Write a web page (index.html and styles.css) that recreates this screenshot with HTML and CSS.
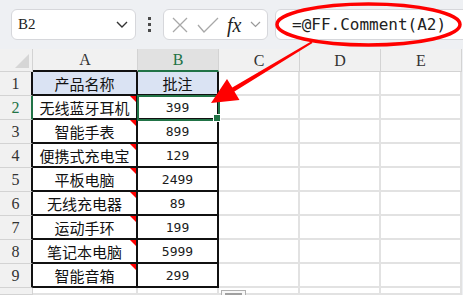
FILE: index.html
```html
<!DOCTYPE html>
<html lang="zh-CN">
<head>
  <meta charset="UTF-8" />
  <meta name="viewport" content="width=device-width, initial-scale=1.0"/>
  <title>FF.Comment</title>
  <link rel="stylesheet" href="styles.css">
</head>
<body>
  <div class="toolbar">
    <div class="name-box">
      <span>B2</span>
      <svg class="chev" width="12" height="7" viewBox="0 0 12 7"><path d="M1 1l5 5 5-5" fill="none" stroke="#333" stroke-width="1.4"/></svg>
    </div>
    <div class="grip"><i></i><i></i><i></i></div>
    <div class="fx-tools">
      <svg width="16" height="16" viewBox="0 0 16 16"><path d="M1 1l14 14M15 1L1 15" stroke="#a8a8a8" stroke-width="1.3"/></svg>
      <svg width="22" height="16" viewBox="0 0 22 16"><path d="M1 8l6 7L21 1" fill="none" stroke="#a8a8a8" stroke-width="1.3"/></svg>
      <span class="fx">fx</span>
      <svg width="11" height="7" viewBox="0 0 11 7"><path d="M1 1l4.5 4.5L10 1" fill="none" stroke="#999" stroke-width="1.2"/></svg>
    </div>
    <div class="formula">=@FF.Comment(A2)</div>
  </div>

  <div class="sheet">
    <div class="corner"></div>
    <div class="col-head edge">A</div>
    <div class="col-head active">B</div>
    <div class="col-head">C</div>
    <div class="col-head">D</div>
    <div class="col-head">E</div>

    <div class="row-head edge">1</div>
    <div class="cell tbl head">产品名称</div>
    <div class="cell tbl head">批注</div>
    <div class="cell"></div><div class="cell"></div><div class="cell"></div>

    <div class="row-head active">2</div>
    <div class="cell tbl note">无线蓝牙耳机</div>
    <div class="cell tbl num selected">399</div>
    <div class="cell"></div><div class="cell"></div><div class="cell"></div>

    <div class="row-head edge">3</div>
    <div class="cell tbl note">智能手表</div>
    <div class="cell tbl num">899</div>
    <div class="cell"></div><div class="cell"></div><div class="cell"></div>

    <div class="row-head edge">4</div>
    <div class="cell tbl note">便携式充电宝</div>
    <div class="cell tbl num">129</div>
    <div class="cell"></div><div class="cell"></div><div class="cell"></div>

    <div class="row-head edge">5</div>
    <div class="cell tbl note">平板电脑</div>
    <div class="cell tbl num">2499</div>
    <div class="cell"></div><div class="cell"></div><div class="cell"></div>

    <div class="row-head edge">6</div>
    <div class="cell tbl note">无线充电器</div>
    <div class="cell tbl num">89</div>
    <div class="cell"></div><div class="cell"></div><div class="cell"></div>

    <div class="row-head edge">7</div>
    <div class="cell tbl note">运动手环</div>
    <div class="cell tbl num">199</div>
    <div class="cell"></div><div class="cell"></div><div class="cell"></div>

    <div class="row-head edge">8</div>
    <div class="cell tbl note">笔记本电脑</div>
    <div class="cell tbl num">5999</div>
    <div class="cell"></div><div class="cell"></div><div class="cell"></div>

    <div class="row-head edge">9</div>
    <div class="cell tbl note">智能音箱</div>
    <div class="cell tbl num">299</div>
    <div class="cell"></div><div class="cell"></div><div class="cell"></div>

    <div class="row-head"></div>
    <div class="cell"></div><div class="cell"></div><div class="cell"></div><div class="cell"></div><div class="cell"></div>
  </div>

  <!-- callout drawn over the sheet -->
  <svg class="callout" width="463" height="295" viewBox="0 0 463 295">
    <ellipse cx="368.5" cy="24.5" rx="91.5" ry="20.5" fill="none" stroke="#f00" stroke-width="3.5"/>
    <polygon points="211,103 227,79 232.3,87.4 311.5,41.2 312.5,43 234.4,91.4 239.5,100" fill="#f00"/>
  </svg>
  <div class="quick-btn"><i></i></div>
</body>
</html>
```

FILE: styles.css
```css
:root {
  --bar: #eef0f3;
  --head: #f1f1f1;
  --head-active: #e1e1e1;
  --head-line: #d3d3d3;
  --grid: #e2e2e2;
  --green: #217346;
  --blue-fill: #dae3f3;
  --red: #ff0000;
}

* {
  box-sizing: border-box;
  margin: 0;
  padding: 0;
}

body {
  width: 463px;
  height: 295px;
  overflow: hidden;
  position: relative;
  background: #ffffff;
  font-family: "Noto Sans CJK SC", sans-serif;
  color: #111;
}

/* ---------- formula toolbar ---------- */

.toolbar {
  height: 49px;
  background: var(--bar);
  display: flex;
  align-items: flex-start;
  padding: 9px 0 0 11px;
}

.name-box,
.fx-tools,
.formula {
  height: 31px;
  background: #fff;
  border: 1px solid #d6d7db;
  border-radius: 6px;
  display: flex;
  align-items: center;
}

.name-box {
  width: 125px;
  padding: 0 7px 0 6px;
  justify-content: space-between;
  font-family: "Liberation Serif", serif;
  font-size: 15px;
  color: #222;
}

.grip {
  width: 4px;
  margin: 0 12px 0 11px;
  height: 31px;
  display: flex;
  flex-direction: column;
  justify-content: center;
  align-items: center;
  gap: 3px;
}

.grip i {
  width: 3px;
  height: 3px;
  background: #4a4a4a;
}

.fx-tools {
  width: 105px;
  padding: 0 6px 0 8px;
  justify-content: space-between;
}

.fx {
  font-family: "Liberation Serif", serif;
  font-style: italic;
  font-size: 20px;
  color: #222;
  line-height: 1;
}

.formula {
  flex: 1;
  margin-left: 7px;
  margin-right: -10px;
  padding-left: 16px;
  font-family: "DejaVu Sans Mono", monospace;
  font-size: 16px;
  color: #222;
}

/* ---------- sheet grid ---------- */

.sheet {
  display: grid;
  grid-template-columns: 33px 105px 81px 81px 81px 81px;
  grid-template-rows: 23px repeat(9, 24px) 7px;
  background: var(--bar);
}

.corner,
.col-head,
.row-head {
  background: var(--head);
  font-family: "Liberation Serif", serif;
  font-size: 16px;
  color: #333;
  display: flex;
  align-items: center;
  justify-content: center;
}

.corner {
  position: relative;
  border-right: 1px solid var(--head-line);
  border-bottom: 1px solid var(--head-line);
}

.corner::after {
  content: "";
  position: absolute;
  right: 3px;
  bottom: 3px;
  border-left: 14px solid transparent;
  border-bottom: 14px solid #d6d6d6;
}

.col-head {
  border-right: 1px solid var(--head-line);
  border-bottom: 1px solid var(--head-line);
  padding-top: 1px;
}

.col-head.edge {
  border-bottom: 2px solid #111;
}

.col-head.active {
  background: var(--head-active);
  color: var(--green);
  border-bottom: 2px solid var(--green);
}

.row-head {
  border-right: 1px solid var(--head-line);
  border-bottom: 1px solid var(--head-line);
}

.row-head.edge {
  border-right: 2px solid #111;
}

.row-head.active {
  color: var(--green);
  border-right: 2px solid var(--green);
}

.cell {
  background: #fff;
  border-right: 2px solid var(--grid);
  border-bottom: 2px solid var(--grid);
  display: flex;
  align-items: center;
  justify-content: center;
  font-size: 15px;
  position: relative;
}

.cell.tbl {
  border-right-color: #111;
  border-bottom-color: #111;
}

.cell.head {
  background: var(--blue-fill);
}

.cell.num {
  font-family: "DejaVu Sans Mono", monospace;
  font-size: 13px;
  color: #1a1a1a;
}

/* comment marker */
.cell.note::after {
  content: "";
  position: absolute;
  top: 0;
  right: 0;
  border-left: 6px solid transparent;
  border-top: 6px solid var(--red);
}

.cell.selected {
  outline: 2px solid var(--green);
  outline-offset: -1px;
  z-index: 2;
}

.cell.selected::after {
  content: "";
  position: absolute;
  right: -4px;
  bottom: -4px;
  width: 6px;
  height: 6px;
  background: var(--green);
  border: 1px solid #fff;
}

/* ---------- overlays ---------- */

.callout {
  position: absolute;
  left: 0;
  top: 0;
  pointer-events: none;
  z-index: 5;
}

.quick-btn {
  position: absolute;
  left: 221px;
  top: 290px;
  width: 25px;
  height: 10px;
  border: 1px solid #b0b0b0;
  background: #f7f7f7;
  padding: 2px 3px;
}

.quick-btn i {
  display: block;
  height: 4px;
  background: #a0a0a0;
}
```
